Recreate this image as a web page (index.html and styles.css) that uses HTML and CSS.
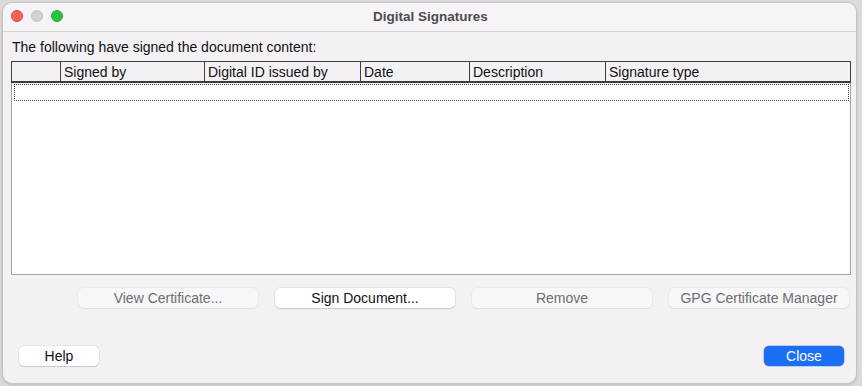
FILE: index.html
```html
<!DOCTYPE html>
<html>
<head>
<meta charset="utf-8">
<link rel="stylesheet" href="styles.css">
</head>
<body>
<div class="window">
  <div class="titlebar">
    <div class="lights">
      <span class="light red"></span>
      <span class="light grey"></span>
      <span class="light green"></span>
    </div>
    <div class="title">Digital Signatures</div>
  </div>
  <div class="content">
    <div class="label">The following have signed the document content:</div>
    <div class="table">
      <div class="thead">
        <div class="th c0"></div>
        <div class="th c1">Signed by</div>
        <div class="th c2">Digital ID issued by</div>
        <div class="th c3">Date</div>
        <div class="th c4">Description</div>
        <div class="th c5">Signature type</div>
      </div>
      <div class="tbody">
        <div class="focusrow"></div>
      </div>
    </div>
    <div class="actions">
      <button class="btn disabled">View Certificate...</button>
      <button class="btn">Sign Document...</button>
      <button class="btn disabled">Remove</button>
      <button class="btn disabled">GPG Certificate Manager</button>
    </div>
    <div class="footer">
      <button class="btn small">Help</button>
      <button class="btn small primary">Close</button>
    </div>
  </div>
</div>
</body>
</html>
```
FILE: styles.css
```css
html, body {
  margin: 0;
  padding: 0;
}
body {
  width: 862px;
  height: 386px;
  background: #dcdadd;
  font-family: "Liberation Sans", Arial, sans-serif;
  font-size: 14px;
  color: #1c1c1c;
  padding: 2px 0 0 2px;
  box-sizing: border-box;
  overflow: hidden;
}
.window {
  width: 855px;
  height: 382px;
  box-sizing: border-box;
  background: #f3f1f4;
  border: 1px solid #c4c2c5;
  border-radius: 10px;
  box-shadow: 0 1px 3px rgba(0,0,0,0.15);
  overflow: hidden;
  display: flex;
  flex-direction: column;
}
.titlebar {
  height: 28px;
  flex: none;
  background: #f6f4f7;
  border-bottom: 1px solid #d6d4d7;
  display: flex;
  align-items: center;
  position: relative;
}
.lights {
  display: flex;
  gap: 8px;
  padding-left: 8px;
  position: absolute;
  left: 0;
  top: 7px;
}
.light {
  width: 12px;
  height: 12px;
  border-radius: 50%;
  box-sizing: border-box;
}
.light.red { background: #fe5f57; border: 0.5px solid #e0443e; }
.light.grey { background: #d1d0d2; border: 0.5px solid #c0bfc1; }
.light.green { background: #29c23f; border: 0.5px solid #1aab29; }
.title {
  flex: 1;
  text-align: center;
  font-weight: bold;
  color: #4d4b4e;
  font-size: 13.5px;
  padding-left: 2px;
  margin-top: -2px;
}
.content {
  flex: 1;
  display: flex;
  flex-direction: column;
  padding: 7px 5px 0 8px;
}
.label {
  height: 16px;
  line-height: 16px;
  padding-left: 1px;
  color: #111;
}
.table {
  margin-top: 6px;
  width: 840px;
  display: flex;
  flex-direction: column;
}
.thead {
  display: flex;
  height: 22px;
  box-sizing: border-box;
  border: 1px solid #3e3d3f;
  border-bottom-width: 2px;
  background: #f3f1f4;
}
.th {
  box-sizing: border-box;
  line-height: 20px;
  padding-left: 3px;
  border-left: 1px solid #3e3d3f;
  color: #111;
  white-space: nowrap;
}
.th.c0 { width: 48px; border-left: none; }
.th.c1 { width: 144px; }
.th.c2 { width: 156px; }
.th.c3 { width: 109px; }
.th.c4 { width: 136px; }
.th.c5 { flex: 1; }
.tbody {
  height: 192px;
  box-sizing: border-box;
  background: #ffffff;
  border: 1px solid #a3a1a4;
  border-top: none;
  padding: 1px 0 0 2px;
}
.focusrow {
  width: 835px;
  height: 17px;
  box-sizing: border-box;
  border: 1px dotted #444;
}
.actions {
  display: flex;
  gap: 17px;
  padding-left: 67px;
  margin-top: 13px;
}
.btn {
  font-family: "Liberation Sans", Arial, sans-serif;
  font-size: 14px;
  width: 180px;
  height: 20px;
  padding: 0;
  border: none;
  border-radius: 5px;
  background: #ffffff;
  color: #111;
  box-shadow: 0 0 0 0.5px rgba(0,0,0,0.12), 0 1px 1px rgba(0,0,0,0.12);
  line-height: 20px;
}
.btn.disabled {
  background: #f7f6f8;
  color: #6f6d70;
  box-shadow: 0 0 0 0.5px rgba(0,0,0,0.06), 0 1px 1px rgba(0,0,0,0.05);
}
.footer {
  display: flex;
  justify-content: space-between;
  margin-top: 38px;
  padding: 0 7px 0 8px;
}
.btn.small {
  width: 80px;
}
.btn.primary {
  background: #1a6ff5;
  color: #ffffff;
  box-shadow: 0 0 0 0.5px rgba(0,60,200,0.4);
}
```
